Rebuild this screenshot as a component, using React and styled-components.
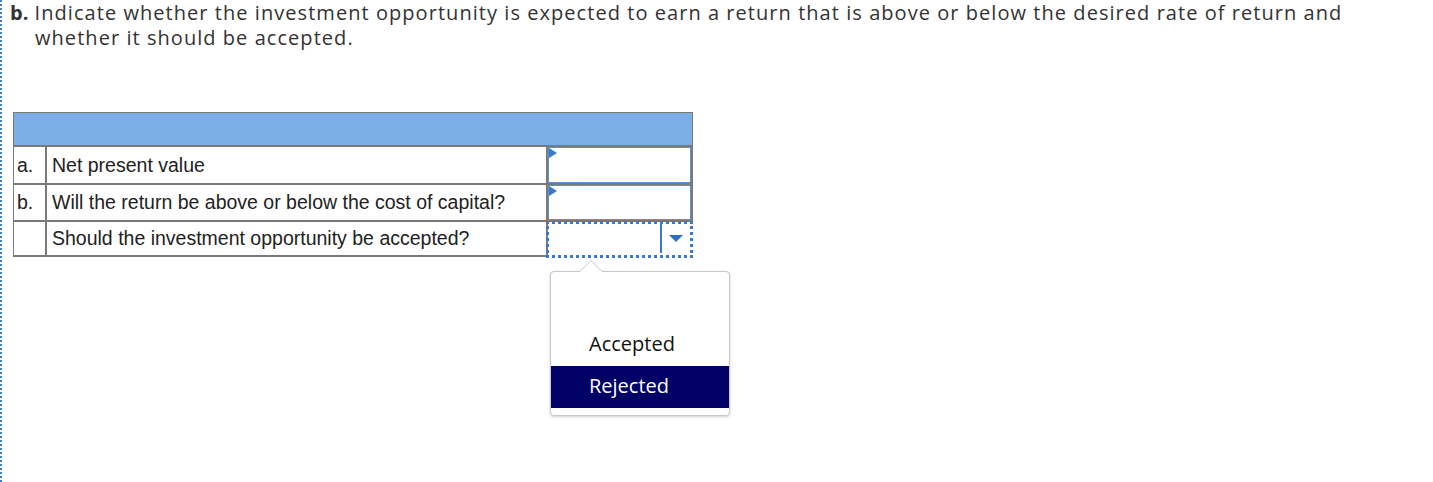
import React from "react";
import styled, { createGlobalStyle } from "styled-components";

const GlobalStyle = createGlobalStyle`
  html, body {
    margin: 0;
    padding: 0;
    background: #fff;
  }
`;

const Page = styled.div`
  position: relative;
  display: flow-root;
  min-height: 482px;
  box-sizing: border-box;
  border-left: 2px dotted #3b7fd0;
  padding: 0 0 0 8px;
  font-family: "Open Sans", "Liberation Sans", sans-serif;
`;

const Question = styled.p`
  margin: 0;
  padding-left: 25px;
  text-indent: -25px;
  font-size: 20px;
  line-height: 25px;
  color: #333;
  letter-spacing: 1.05px;
  width: 1360px;
`;

const Label = styled.b`
  font-weight: 700;
  letter-spacing: 0;
`;

const Table = styled.div`
  margin: 62px 0 0 3px;
  width: 680px;
  display: flex;
  flex-direction: column;
  font-family: "Liberation Sans", Arial, sans-serif;
  font-size: 19.5px;
  color: #222;
`;

const HeaderBand = styled.div`
  height: 32px;
  background: #7aaee5;
  border: 1px solid #7a7a7a;
  border-bottom: 2px solid #7a7a7a;
`;

const Row = styled.div`
  display: flex;
  height: ${(p) => p.h}px;
`;

const Letter = styled.div`
  width: 28px;
  box-sizing: content-box;
  border-left: 1px solid #7a7a7a;
  border-right: 2px solid #7a7a7a;
  border-bottom: 2px solid #7a7a7a;
  padding-left: 3px;
  display: flex;
  align-items: center;
`;

const Text = styled.div`
  width: 494px;
  box-sizing: content-box;
  border-bottom: 2px solid #7a7a7a;
  border-right: 2px solid #7a7a7a;
  padding-left: 5px;
  display: flex;
  align-items: center;
`;

const InputCell = styled.div`
  position: relative;
  flex: 1;
  border-right: 2px solid #7a7a7a;
  border-bottom: 2px solid #7a7a7a;
  display: flex;
`;

const InputBox = styled.div`
  flex: 1;
  border: 1px solid #5b8fd6;
  background: #fff;
`;

const Flag = styled.span`
  position: absolute;
  left: 1px;
  top: 1px;
  width: 0;
  height: 0;
  border-top: 5px solid transparent;
  border-bottom: 5px solid transparent;
  border-left: 8px solid #3a78c8;
`;

const SelectCell = styled.div`
  position: relative;
  flex: 1;
  margin-left: -2px;
  margin-top: -1px;
  height: 37px;
  box-sizing: border-box;
  border: 3px dotted #3a78c8;
  display: flex;
  justify-content: flex-end;
`;

const Arrow = styled.div`
  width: 28px;
  border-left: 2px solid #3a78c8;
  margin: 0 0 2px;
  display: flex;
  align-items: center;
  justify-content: center;
  &::after {
    content: "";
    border-left: 7px solid transparent;
    border-right: 7px solid transparent;
    border-top: 7px solid #2f6fc1;
  }
`;

const Popup = styled.div`
  position: absolute;
  left: 548px;
  top: 271px;
  width: 178px;
  padding: 10px 0 7px;
  border: 1px solid #c8c8c8;
  border-radius: 4px;
  background: #fff;
  box-shadow: 0 1px 3px rgba(0, 0, 0, 0.18);
  font-family: "Open Sans", "Noto Sans", sans-serif;
  font-size: 20px;

  &::before,
  &::after {
    content: "";
    position: absolute;
    left: 28px;
    width: 0;
    height: 0;
    border-left: 12px solid transparent;
    border-right: 12px solid transparent;
  }
  &::before {
    top: -12px;
    border-bottom: 12px solid #c8c8c8;
  }
  &::after {
    top: -11px;
    border-bottom: 12px solid #fff;
  }
`;

const Option = styled.div`
  height: 42px;
  line-height: 40px;
  padding-left: 38px;
  color: ${(p) => (p.selected ? "#fff" : "#111")};
  background: ${(p) => (p.selected ? "#000066" : "transparent")};
`;

export default function App() {
  return (
    <Page>
      <GlobalStyle />
      <Question>
        <Label>b.</Label> Indicate whether the investment opportunity is expected to earn a
        return that is above or below the desired rate of return and whether it should be
        accepted.
      </Question>
      <Table>
        <HeaderBand />
        <Row h={38}>
          <Letter>a.</Letter>
          <Text>Net present value</Text>
          <InputCell>
            <InputBox />
            <Flag />
          </InputCell>
        </Row>
        <Row h={37}>
          <Letter>b.</Letter>
          <Text>Will the return be above or below the cost of capital?</Text>
          <InputCell>
            <InputBox />
            <Flag />
          </InputCell>
        </Row>
        <Row h={35}>
          <Letter />
          <Text>Should the investment opportunity be accepted?</Text>
          <SelectCell>
            <Arrow />
          </SelectCell>
        </Row>
      </Table>
      <Popup>
        <Option />
        <Option>Accepted</Option>
        <Option selected>Rejected</Option>
      </Popup>
    </Page>
  );
}
